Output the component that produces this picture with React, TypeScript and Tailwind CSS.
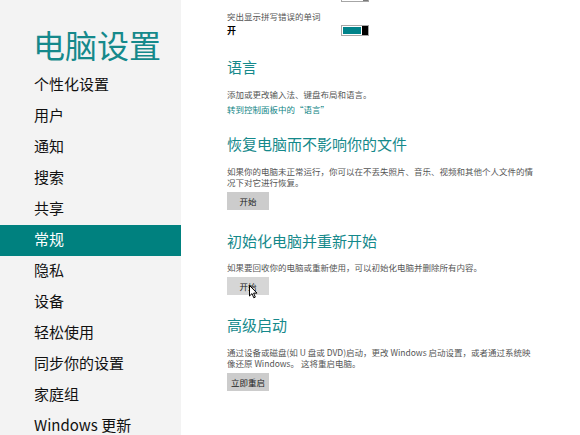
const navItems = [
  '个性化设置',
  '用户',
  '通知',
  '搜索',
  '共享',
  '常规',
  '隐私',
  '设备',
  '轻松使用',
  '同步你的设置',
  '家庭组',
  'Windows 更新',
]

function Toggle({ on }: { on: boolean }) {
  return (
    <div className="flex h-[11px] w-[28px] border border-[#a6a6a6] bg-white">
      <div className={on ? 'm-px flex-1 bg-[#00838a]' : 'm-px flex-1 bg-[#ececec]'} />
      <div className={on ? 'w-[6px] bg-black' : 'w-[5px] bg-[#7a7a7a]'} />
    </div>
  )
}

function Btn({ label, hover }: { label: string; hover?: boolean }) {
  return (
    <button
      type="button"
      className={`flex h-[18px] w-[42px] items-center justify-center text-[8.5px] text-[#222] ${
        hover ? 'bg-[#d6d6d6]' : 'bg-[#cccccc]'
      }`}
    >
      {label}
    </button>
  )
}

function App() {
  return (
    <div
      className="relative flex h-[435px] w-[580px] overflow-hidden bg-white"
      style={{ fontFamily: '"Noto Sans CJK SC", "Noto Sans", sans-serif' }}
    >
      <aside className="flex w-[181px] shrink-0 flex-col bg-[#f3f3f3] pt-[24px]">
        <h1 className="mb-[6px] shrink-0 pl-[33px] text-[32px] leading-[40px] text-[#15898b]">电脑设置</h1>
        {navItems.map((item) => (
          <div
            key={item}
            className={`h-[31px] shrink-0 pl-[34px] text-[15px] leading-[28px] ${
              item === '常规' ? 'bg-[#00817f] text-white' : 'text-[#111]'
            }`}
          >
            {item}
          </div>
        ))}
      </aside>

      <main className="flex flex-1 flex-col pl-[46px]">
        <div className="-mt-[9px] ml-[114px]">
          <Toggle on={false} />
        </div>
        <p className="mt-[8px] text-[8.5px] leading-[12px] text-[#555]">突出显示拼写错误的单词</p>
        <div className="mt-[3px] flex h-[11px] items-center">
          <span className="w-[114px] text-[9px] font-bold text-black">开</span>
          <Toggle on />
        </div>

        <h2 className="mt-[21px] text-[15px] leading-[20px] text-[#15898b]">语言</h2>
        <p className="mt-[11px] text-[8.5px] leading-[12px] text-[#555]">添加或更改输入法、键盘布局和语言。</p>
        <a className="mt-[3px] text-[8.5px] leading-[12px] text-[#0f8585]">转到控制面板中的“语言”</a>

        <h2 className="mt-[19px] text-[15px] leading-[20px] text-[#15898b]">恢复电脑而不影响你的文件</h2>
        <p className="mt-[12px] text-[8.5px] leading-[11px] text-[#555]">
          如果你的电脑未正常运行，你可以在不丢失照片、音乐、视频和其他个人文件的情
          <br />
          况下对它进行恢复。
        </p>
        <div className="mt-[4px]">
          <Btn label="开始" />
        </div>

        <h2 className="mt-[21px] text-[15px] leading-[20px] text-[#15898b]">初始化电脑并重新开始</h2>
        <p className="mt-[11px] text-[8.5px] leading-[11px] text-[#555]">
          如果要回收你的电脑或重新使用，可以初始化电脑并删除所有内容。
        </p>
        <div className="mt-[4px]">
          <Btn label="开始" hover />
        </div>

        <h2 className="mt-[20px] text-[15px] leading-[20px] text-[#15898b]">高级启动</h2>
        <p className="mt-[12px] text-[8.5px] leading-[11px] text-[#555]">
          通过设备或磁盘(如 U 盘或 DVD)启动，更改 Windows 启动设置，或者通过系统映
          <br />
          像还原 Windows。 这将重启电脑。
        </p>
        <div className="mt-[4px]">
          <Btn label="立即重启" />
        </div>
      </main>

      <svg className="absolute left-[249px] top-[285px]" width="9" height="14" viewBox="0 0 9 14">
        <path d="M0.5 0.5 L0.5 11 L3 8.6 L4.8 12.8 L6.3 12.1 L4.6 8.1 L8 8.1 Z" fill="white" stroke="black" strokeWidth="1" />
      </svg>
    </div>
  )
}

export default App
